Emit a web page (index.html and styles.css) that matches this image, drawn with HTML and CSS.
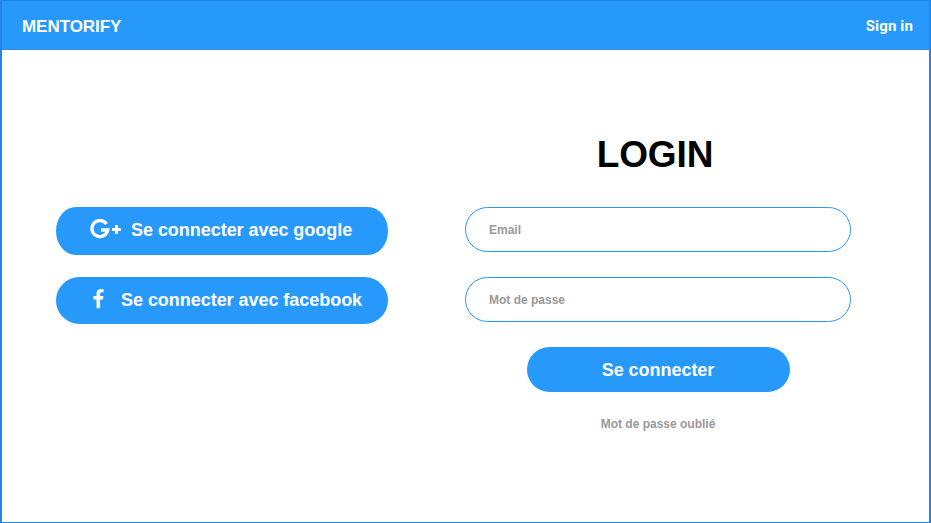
FILE: index.html
```
<!DOCTYPE html>
<html lang="fr">
<head>
<meta charset="utf-8">
<title>Mentorify</title>
<link rel="stylesheet" href="styles.css">
</head>
<body>
<header class="topbar">
  <span class="brand">MENTORIFY</span>
  <a class="signin">Sign in</a>
</header>
<main class="content">
  <section class="social">
    <button class="btn btn-google">
      <svg class="icon-google" width="32" height="22" viewBox="0 0 32 22">
        <path d="M16.5 5A8 8 0 1 0 17.8 11H11" fill="none" stroke="#fff" stroke-width="3.4"/>
        <path d="M26.5 6v9M22 10.5h9" fill="none" stroke="#fff" stroke-width="2.8"/>
      </svg>
      <span>Se connecter avec google</span>
    </button>
    <button class="btn btn-facebook">
      <svg class="icon-facebook" width="11" height="20" viewBox="0 0 11 20">
        <path d="M10.6.3V3.3H8.8C7.4 3.3 7.1 4 7.1 5V7.1H10.5L10 10.4H7.1V19.2H3.5V10.4H.5V7.1H3.5V4.6C3.5 1.7 5.3.1 8 .1C9.2.1 10.3.2 10.6.3Z" fill="#fff"/>
      </svg>
      <span>Se connecter avec facebook</span>
    </button>
  </section>
  <form class="login">
    <h1 class="title">LOGIN</h1>
    <input class="field" type="email" placeholder="Email">
    <input class="field" type="password" placeholder="Mot de passe">
    <button class="btn btn-submit" type="button">Se connecter</button>
    <a class="forgot">Mot de passe oublié</a>
  </form>
</main>
</body>
</html>
```
FILE: styles.css
```
* { box-sizing: border-box; }

body {
  margin: 0;
  height: 523px;
  border: 1px solid #2583ec;
  border-width: 1px 2px;
  background: #fff;
  font-family: "Liberation Sans", Arial, sans-serif;
  font-weight: bold;
  overflow: hidden;
}

.topbar {
  display: flex;
  align-items: center;
  justify-content: space-between;
  height: 49px;
  padding: 1px 16px 0 20px;
  border-bottom: 1px solid #3d8fdb;
  background: #2699fb;
  color: #fff;
}

.brand {
  padding-top: 2px;
  font-size: 17px;
  letter-spacing: -0.05px;
}

.signin {
  font-family: Roboto, sans-serif;
  font-size: 15px;
  letter-spacing: 0.15px;
}

.content {
  display: grid;
  grid-template-columns: 332px 386px;
  column-gap: 77px;
  padding: 80px 0 0 54px;
}

.social {
  display: flex;
  flex-direction: column;
  gap: 22px;
  padding-top: 77px;
}

.btn {
  display: flex;
  align-items: center;
  border: 0;
  background: #2699fb;
  color: #fff;
  font: bold 18px "Liberation Sans", Arial, sans-serif;
  letter-spacing: -0.04px;
}

.btn-google {
  height: 48px;
  padding: 0 0 2px 34px;
  border-radius: 20px / 24px;
}

.icon-google {
  flex: none;
  margin-right: 9px;
}

.btn-facebook {
  height: 47px;
  padding: 0 0 1px 37px;
  border-radius: 24px;
}

.icon-facebook {
  flex: none;
  margin: 0 17px 2px 0;
}

.login {
  display: flex;
  flex-direction: column;
  align-items: center;
}

.title {
  margin: 1px 6px 28px 0;
  font-size: 37px;
  line-height: 48px;
  letter-spacing: -0.1px;
}

.field {
  width: 386px;
  height: 45px;
  margin-bottom: 25px;
  padding: 0 23px;
  border: 1px solid #2699fb;
  border-radius: 23px;
  background: #fff;
  font: bold 12px "Liberation Sans", Arial, sans-serif;
}

.field::placeholder {
  color: #999;
  opacity: 1;
}

.btn-submit {
  justify-content: center;
  width: 263px;
  height: 45px;
  padding: 2px 0 0;
  border-radius: 23px;
}

.forgot {
  margin-top: 24px;
  color: #999;
  font-size: 12px;
  line-height: 16px;
}
```
